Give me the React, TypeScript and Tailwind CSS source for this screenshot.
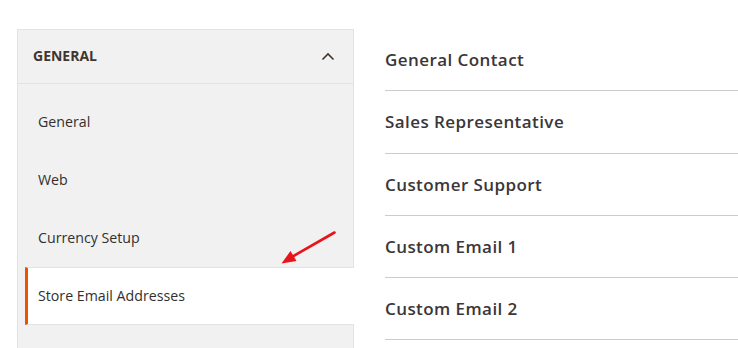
import React from "react";

const items = ["General", "Web", "Currency Setup", "Store Email Addresses"];
const sections = [
  "General Contact",
  "Sales Representative",
  "Customer Support",
  "Custom Email 1",
  "Custom Email 2",
];

export default function App() {
  return (
    <div
      className="relative flex h-[348px] w-[738px] overflow-hidden bg-white pl-[17px] pt-[29px]"
      style={{ fontFamily: '"Open Sans", "Noto Sans", sans-serif' }}
    >
      <div className="relative w-[337px] shrink-0 self-stretch min-h-[400px] border border-[#e3e3e3] bg-[#f1f1f1]">
        <div className="flex h-[54px] items-center justify-between border-b border-[#e3e3e3] pb-[2px] pl-[15px] pr-[18px]">
          <span className="text-[14px] font-bold uppercase text-[#41362f]">General</span>
          <svg width="14" height="9" viewBox="0 0 14 9" className="mt-[1px]">
            <path d="M1.5 7.5 L7 2 L12.5 7.5" fill="none" stroke="#41362f" strokeWidth="1.6" />
          </svg>
        </div>
        <ul className="pt-[9px]">
          {items.map((it, i) => {
            const active = i === items.length - 1;
            return (
              <li
                key={it}
                className={
                  active
                    ? "ml-[7px] mr-[-1px] flex h-[58px] items-center border-y border-l-[3px] border-y-[#e3e3e3] border-l-[#eb5202] bg-white pb-[1px] pl-[10px] text-[14.2px] text-[#303030]"
                    : "ml-[7px] flex h-[58px] items-center border-y border-l-[3px] border-transparent pb-[1px] pl-[10px] text-[14.2px] text-[#303030]"
                }
              >
                {it}
              </li>
            );
          })}
        </ul>
        <svg
          className="absolute left-[255px] top-[195px]"
          width="70"
          height="45"
          viewBox="255 195 70 45"
        >
          <line x1="316.5" y1="202.5" x2="272" y2="228" stroke="#e8141b" strokeWidth="2.6" strokeLinecap="round" />
          <polygon points="263.5,233.5 278.5,231 272.5,221" fill="#e8141b" />
        </svg>
      </div>
      <div className="ml-[31px] flex-1">
        {sections.map((s) => (
          <div key={s} className="border-b border-[#cccccc] pb-[19px] pt-[20px]">
            <div className="text-[17px] font-semibold leading-[22.3px] tracking-[0.025em] text-[#3b3638]">
              {s}
            </div>
          </div>
        ))}
      </div>
    </div>
  );
}
